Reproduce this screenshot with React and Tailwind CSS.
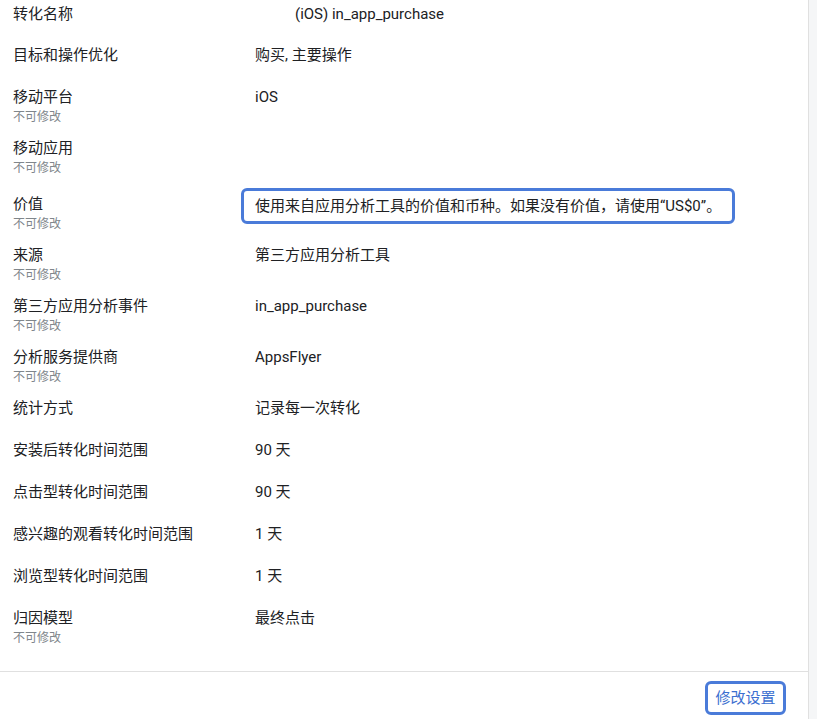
export default function App() {
  const rows = [
    { label: "转化名称", value: "(iOS) in_app_purchase", h: "h-[41px]", indent: true },
    { label: "目标和操作优化", value: "购买, 主要操作", h: "h-[42px]" },
    { label: "移动平台", value: "iOS", sub: true, h: "h-[51px]" },
    { label: "移动应用", value: "", sub: true, h: "h-[56px]" },
    { label: "价值", value: "使用来自应用分析工具的价值和币种。如果没有价值，请使用“US$0”。", sub: true, h: "h-[51px]", boxed: true },
    { label: "来源", value: "第三方应用分析工具", sub: true, h: "h-[51px]" },
    { label: "第三方应用分析事件", value: "in_app_purchase", sub: true, h: "h-[51px]" },
    { label: "分析服务提供商", value: "AppsFlyer", sub: true, h: "h-[51px]" },
    { label: "统计方式", value: "记录每一次转化", h: "h-[42px]" },
    { label: "安装后转化时间范围", value: "90 天", h: "h-[42px]" },
    { label: "点击型转化时间范围", value: "90 天", h: "h-[42px]" },
    { label: "感兴趣的观看转化时间范围", value: "1 天", h: "h-[42px]" },
    { label: "浏览型转化时间范围", value: "1 天", h: "h-[42px]" },
    { label: "归因模型", value: "最终点击", sub: true, h: "h-[63px]" },
  ];
  return (
    <div
      className="flex w-[817px] h-[719px] bg-white overflow-hidden"
      style={{ fontFamily: "Roboto, 'Noto Sans CJK SC', sans-serif" }}
    >
      <div className="flex flex-col w-[809px] border-r border-[#e0e0e0]">
        <div className="flex flex-col pt-[4px]">
          {rows.map((r, i) => (
            <div key={i} className={`flex ${r.h}`}>
              <div className="w-[255px] pl-[13px] flex flex-col">
                <div className="text-[15px] leading-[20px] text-[#202124]">{r.label}</div>
                {r.sub && (
                  <div className="text-[12px] leading-[20px] text-[#80868b]">不可修改</div>
                )}
              </div>
              <div className="flex-1">
                {r.boxed ? (
                  <div className="inline-block -ml-[14px] -mt-[8px] border-[3px] border-[#4a7bd9] rounded-[6px] pl-[11px] pr-[11px] py-[5px] text-[15px] leading-[20px] text-[#202124] whitespace-nowrap">
                    {r.value}
                  </div>
                ) : (
                  <div className={`text-[15px] leading-[20px] text-[#202124] ${r.indent ? "pl-[40px]" : ""}`}>
                    {r.value}
                  </div>
                )}
              </div>
            </div>
          ))}
        </div>
        <div className="border-t border-[#e0e0e0] flex justify-end pt-[9px] pr-[22px]">
          <button className="w-[81px] h-[34px] border-[3px] border-[#4a7bd9] rounded-[6px] text-[15px] text-[#3c6fd0] flex items-center justify-center">
            修改设置
          </button>
        </div>
      </div>
      <div className="flex-1 bg-[#f5f6f7]"></div>
    </div>
  );
}
